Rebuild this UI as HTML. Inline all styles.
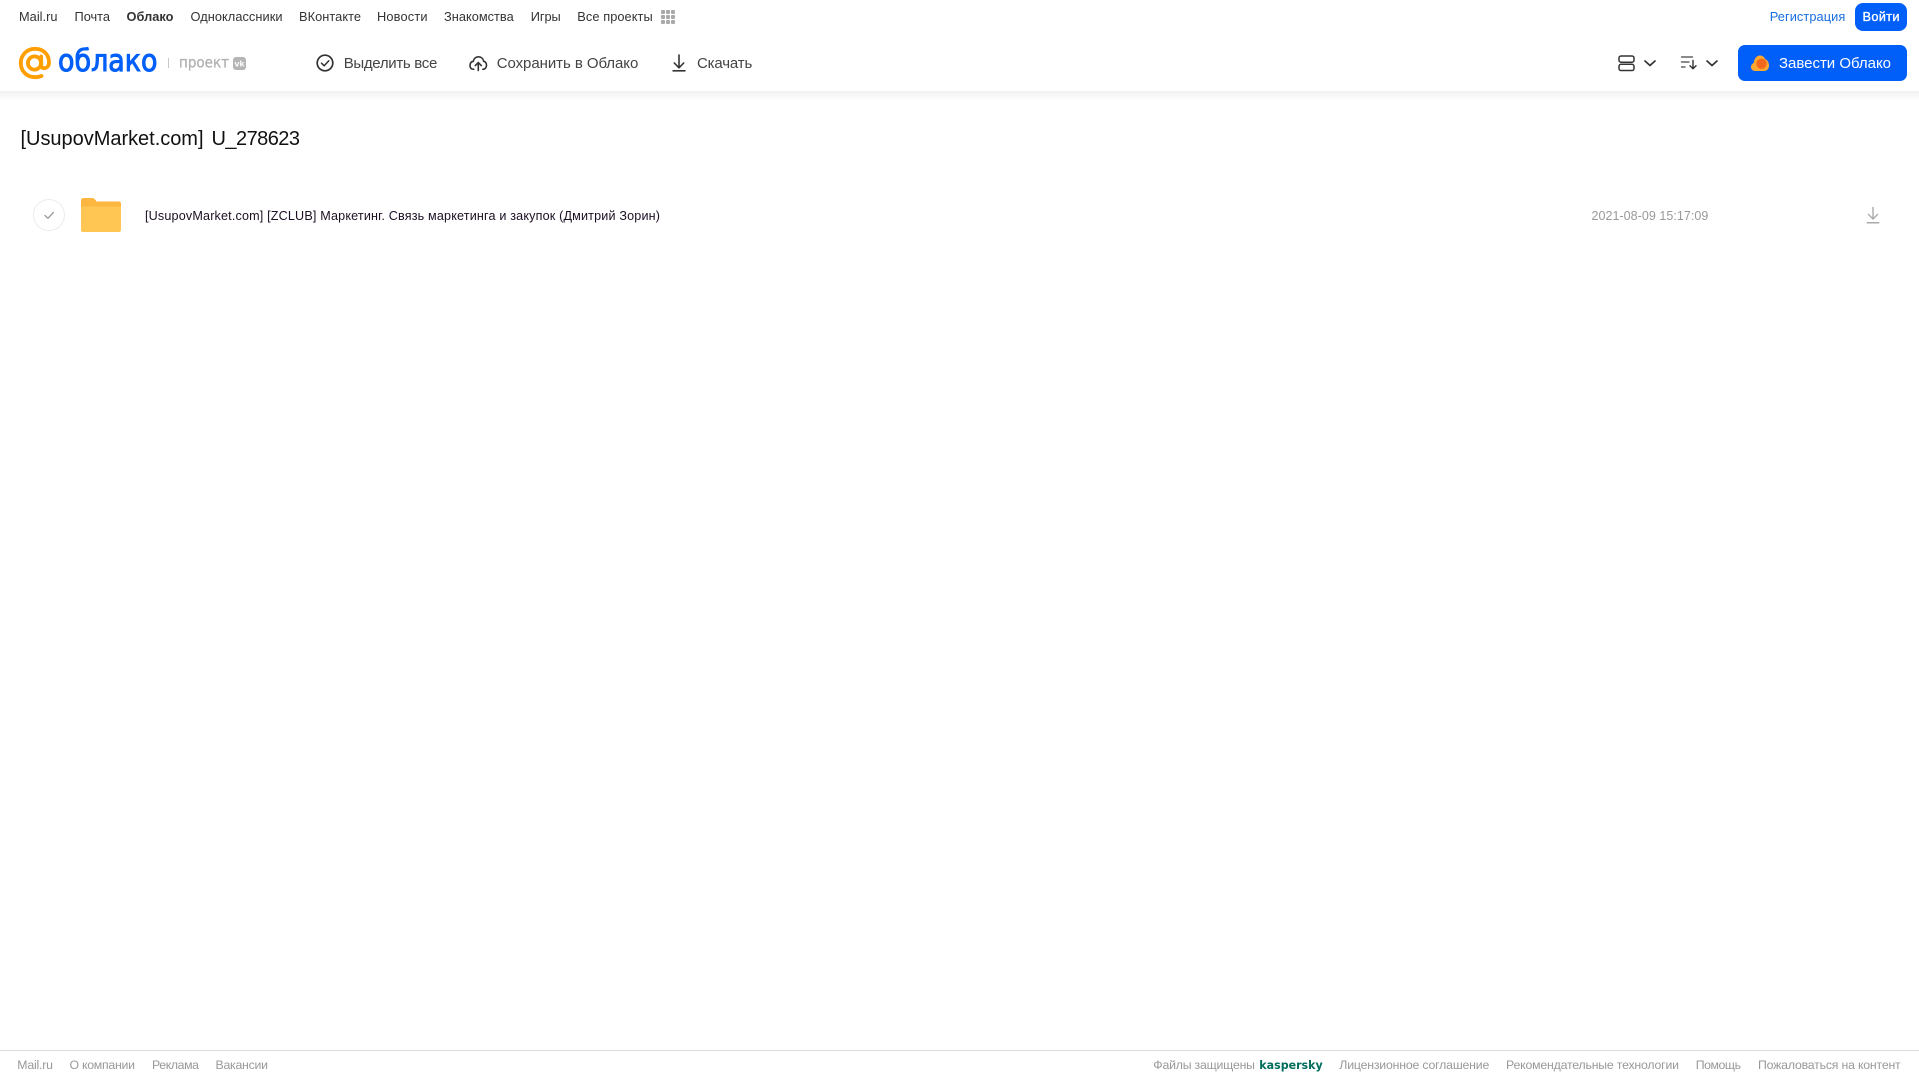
<!DOCTYPE html>
<html lang="ru">
<head>
<meta charset="utf-8">
<title>Облако</title>
<style>
html,body{margin:0;padding:0;background:#fff;width:1919px;height:1079px;overflow:hidden}
svg{display:block;position:absolute;left:0;top:0}
text{font-family:"Liberation Sans",Arial,sans-serif;white-space:pre}
.n{font-size:12.8px;fill:#333}
.t{font-size:15px;fill:#444}
.f{font-size:12.3px;fill:#999}
.d{font-family:"DejaVu Sans",sans-serif}
</style>
</head>
<body>
<svg width="1919" height="1079" viewBox="0 0 1919 1079" xmlns="http://www.w3.org/2000/svg">
<defs>
<linearGradient id="sh" x1="0" y1="0" x2="0" y2="1"><stop offset="0" stop-color="#f1f1f1"/><stop offset="1" stop-color="#fff"/></linearGradient>
</defs>
<rect width="1919" height="1079" fill="#fff"/>
<rect x="0" y="91" width="1919" height="10" fill="url(#sh)"/>

<!-- top nav -->
<text class="n" x="19" y="21" textLength="38.5">Mail.ru</text>
<text class="n" x="74.5" y="21" textLength="35.5">Почта</text>
<text class="n" x="126.5" y="21" textLength="47" style="font-weight:700">Облако</text>
<text class="n" x="190.5" y="21" textLength="92">Одноклассники</text>
<text class="n" x="299" y="21" textLength="62">ВКонтакте</text>
<text class="n" x="377" y="21" textLength="50.5">Новости</text>
<text class="n" x="444" y="21" textLength="69.7">Знакомства</text>
<text class="n" x="530.7" y="21" textLength="30">Игры</text>
<text class="n" x="577.3" y="21" textLength="75.4">Все проекты</text>
<g fill="#aaa">
<rect x="661" y="10" width="4" height="4" rx="1"/><rect x="666" y="10" width="4" height="4" rx="1"/><rect x="671" y="10" width="4" height="4" rx="1"/>
<rect x="661" y="15" width="4" height="4" rx="1"/><rect x="666" y="15" width="4" height="4" rx="1"/><rect x="671" y="15" width="4" height="4" rx="1"/>
<rect x="661" y="20" width="4" height="4" rx="1"/><rect x="666" y="20" width="4" height="4" rx="1"/><rect x="671" y="20" width="4" height="4" rx="1"/>
</g>
<text class="n" x="1769.7" y="21" textLength="75.6" style="fill:#1a6fe0">Регистрация</text>
<rect x="1855" y="3" width="52" height="28" rx="8" fill="#005ff9"/>
<text class="n" x="1862.5" y="21" textLength="37" style="fill:#fff;stroke:#fff;stroke-width:.35">Войти</text>

<!-- logo -->
<g fill="none" stroke="#ff9e00" stroke-width="3.8" stroke-linecap="round">
<circle cx="34.5" cy="63" r="6.6"/>
<path d="M41.2 56.5V65.5C41.2 69.5 49 69.5 49 62.5C49 53.5 42.5 48.8 35 48.8C26.5 48.8 20.8 55.5 20.8 63C20.8 71.5 27 77.2 35 77.2C37.5 77.2 39.5 76.8 41.5 76"/>
</g>
<text class="d" x="58" y="71" textLength="99.5" lengthAdjust="spacingAndGlyphs" style="font-size:30px;fill:#005ff9;stroke:#005ff9;stroke-width:1">облако</text>
<rect x="168" y="58" width="1" height="10" fill="#c8c8c8"/>
<text class="d" x="179" y="67.5" textLength="50" lengthAdjust="spacingAndGlyphs" style="font-size:15.5px;fill:#b0b0b0;stroke:#b0b0b0;stroke-width:.3">проект</text>
<rect x="233" y="57" width="13" height="13" rx="3" fill="#b5b5b5"/>
<text x="234.5" y="66.5" textLength="10" lengthAdjust="spacingAndGlyphs" style="font-size:8px;font-weight:700;fill:#fff">vk</text>

<!-- toolbar -->
<circle cx="325" cy="63" r="7.8" fill="none" stroke="#333" stroke-width="1.7"/>
<path d="M321.5 63.2L324.2 65.8L328.8 60.8" fill="none" stroke="#333" stroke-width="1.5" stroke-linecap="round" stroke-linejoin="round"/>
<text class="t" x="343.7" y="68" textLength="93.6">Выделить все</text>

<path d="M473.8 69.3C471 69.3 470 67.5 470 65.5C470 63 471.5 61.6 473.3 61.3C473.8 58.5 475.8 56.8 478.5 56.8C481.300 56.8 483.2 58.6 483.700 61.3C485.400 61.6 486.500 63.2 486.500 65.3C486.500 67.500 485.200 69.300 482.800 69.300" fill="none" stroke="#333" stroke-width="1.6" stroke-linecap="round"/>
<path d="M478.3 70.500V62.800M475.300 65.600L478.300 62.500L481.300 65.600" fill="none" stroke="#333" stroke-width="1.600" stroke-linecap="round" stroke-linejoin="round"/>
<text class="t" x="496.700" y="68" textLength="141.600">Сохранить в Облако</text>

<path d="M679 55V67.500M674.300 63L679 67.800L683.700 63" fill="none" stroke="#333" stroke-width="1.600" stroke-linecap="round" stroke-linejoin="round"/>
<rect x="672.500" y="70" width="13" height="1.600" fill="#333"/>
<text class="t" x="697" y="68" textLength="55.300">Скачать</text>

<!-- right tools -->
<rect x="1619" y="56" width="15" height="6.200" rx="2" fill="none" stroke="#333" stroke-width="1.500"/>
<rect x="1619" y="64.300" width="15" height="6.200" rx="2" fill="none" stroke="#333" stroke-width="1.500"/>
<path d="M1645 61L1650 65.500L1655 61" fill="none" stroke="#333" stroke-width="1.700" stroke-linecap="round" stroke-linejoin="round"/>
<path d="M1681.500 57H1692.500M1681.500 62H1689M1681.500 67H1685" fill="none" stroke="#444" stroke-width="1.300" stroke-linecap="round"/>
<path d="M1693 60.500V68.500M1690 65.800L1693 68.800L1696 65.800" fill="none" stroke="#333" stroke-width="1.400" stroke-linecap="round" stroke-linejoin="round"/>
<path d="M1707 61L1712 65.500L1717 61" fill="none" stroke="#333" stroke-width="1.700" stroke-linecap="round" stroke-linejoin="round"/>

<rect x="1738" y="45" width="169" height="36" rx="7" fill="#005ff9"/>
<path d="M1755 71C1752.500 71 1751 69 1751 67C1751 65 1752.300 63.500 1753.800 63C1754 59 1756.500 55.500 1760 55.500C1762.500 55.500 1764.300 57 1765 59C1767.500 60 1769 62.500 1769 65.500C1769 68.800 1767 71 1764 71Z" fill="#ffa930"/>
<circle cx="1761.500" cy="63.800" r="5.200" fill="#f4691e"/>
<text x="1779" y="68" textLength="112" style="font-size:15px;fill:#fff">Завести Облако</text>

<!-- title -->
<text x="20.500" y="145" textLength="183" style="font-size:20px;fill:#111">[UsupovMarket.com]</text>
<text x="211.500" y="145" textLength="88.500" style="font-size:20px;fill:#111">U_278623</text>

<!-- row -->
<circle cx="49" cy="215" r="15.500" fill="#fff" stroke="#ececec" stroke-width="1"/>
<path d="M45 215.500L48 218.300L53.300 212.500" fill="none" stroke="#999" stroke-width="1.300" stroke-linecap="round" stroke-linejoin="round"/>
<path d="M81 200.500C81 199 82 198 83.500 198H92C93.500 198 94.500 198.600 95.500 200L96.500 201.500H119C120.200 201.500 121 202.300 121 203.500V208H81Z" fill="#fdb63f"/>
<path d="M81 206.500H121V230C121 231.300 120 232 119 232H83C82 232 81 231.300 81 230Z" fill="#ffc654"/>
<text x="145" y="220" textLength="515" style="font-size:12.600px;fill:#1c0f24">[UsupovMarket.com] [ZCLUB] Маркетинг. Связь маркетинга и закупок (Дмитрий Зорин)</text>
<text x="1591.500" y="220" textLength="116.800" style="font-size:12.500px;fill:#999">2021-08-09 15:17:09</text>
<path d="M1873 207.500V219M1868.500 214.500L1873 219L1877.500 214.500" fill="none" stroke="#aaa" stroke-width="1.400" stroke-linecap="round" stroke-linejoin="round"/>
<rect x="1866.700" y="222" width="12.600" height="1.500" fill="#aaa"/>

<!-- footer -->
<rect x="0" y="1050" width="1919" height="1" fill="#dcdcdc"/>
<text class="f" x="17.300" y="1069" textLength="35.700">Mail.ru</text>
<text class="f" x="69.500" y="1069" textLength="65.500">О компании</text>
<text class="f" x="152" y="1069" textLength="47">Реклама</text>
<text class="f" x="215.500" y="1069" textLength="52.500">Вакансии</text>
<text class="f" x="1153.300" y="1069" textLength="101.700">Файлы защищены</text>
<text class="d" x="1259.300" y="1069" textLength="63.400" lengthAdjust="spacingAndGlyphs" style="font-size:11.500px;font-weight:700;fill:#006d5c">kaspersky</text>
<text class="f" x="1339.300" y="1069" textLength="150">Лицензионное соглашение</text>
<text class="f" x="1506" y="1069" textLength="173">Рекомендательные технологии</text>
<text class="f" x="1695.700" y="1069" textLength="45.300">Помощь</text>
<text class="f" x="1758" y="1069" textLength="142.700">Пожаловаться на контент</text>
</svg>
</body>
</html>
